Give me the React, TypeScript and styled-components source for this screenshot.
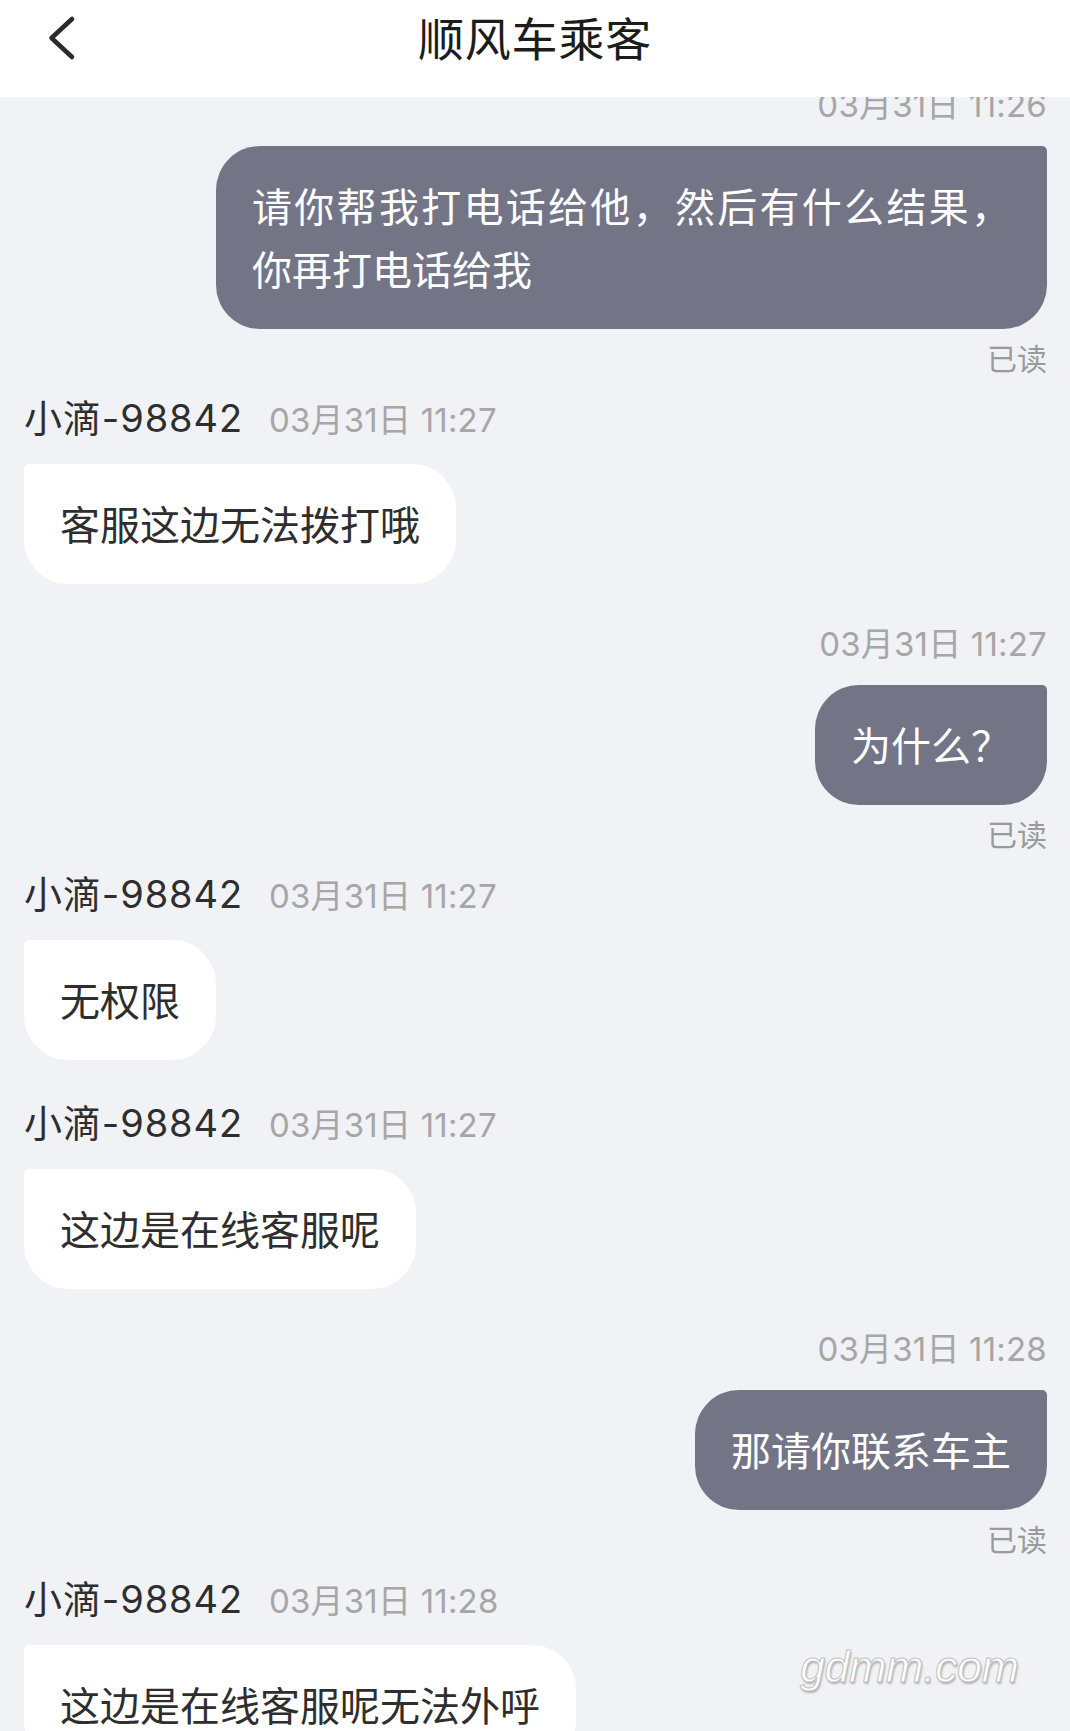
import React from "react";
import styled, { createGlobalStyle } from "styled-components";

const GlobalStyle = createGlobalStyle`
  html, body {
    margin: 0;
    padding: 0;
    background: #f0f2f5;
  }
  body {
    font-family: Inter, "Noto Sans CJK SC", sans-serif;
    -webkit-font-smoothing: antialiased;
  }
  * { box-sizing: border-box; }
`;

const Page = styled.div`
  position: relative;
  width: 1070px;
  height: 1731px;
  display: flex;
  flex-direction: column;
  overflow: hidden;
  background: #f0f2f5;
`;

const Header = styled.header`
  position: relative;
  z-index: 2;
  flex: 0 0 97px;
  height: 97px;
  background: #ffffff;
  display: grid;
  grid-template-columns: 1fr auto 1fr;
  align-items: start;
  padding-top: 7px;
`;

const BackButton = styled.button`
  justify-self: start;
  margin: 8px 0 0 42px;
  padding: 0;
  border: 0;
  background: transparent;
  width: 40px;
  height: 48px;
  display: flex;
  cursor: pointer;
`;

const Title = styled.h1`
  margin: 0;
  font-family: "Noto Sans CJK SC", sans-serif;
  font-size: 46px;
  font-weight: 400;
  line-height: 58px;
  color: #1c1c1c;
  letter-spacing: 0.8px;
`;

const Viewport = styled.main`
  position: relative;
  z-index: 1;
  flex: 1 1 auto;
  min-height: 0;
`;

const ChatList = styled.div`
  display: flex;
  flex-direction: column;
  padding: 0 23px 0 24px;
  margin-top: -12px;
`;

const Block = styled.section<{ $out?: boolean; $read?: boolean }>`
  display: flex;
  flex-direction: column;
  align-items: ${(p) => (p.$out ? "flex-end" : "flex-start")};
  margin-bottom: ${(p) => (p.$read ? 24 : 40)}px;
`;

const MetaRow = styled.div`
  display: flex;
  align-items: baseline;
  gap: 26px;
  height: 46px;
  line-height: 46px;
`;

const Name = styled.span`
  font-size: 38px;
  color: #2e2e2e;
  letter-spacing: 0.9px;
`;

const Time = styled.span<{ $out?: boolean }>`
  font-size: 33px;
  color: #a6a6a6;
  line-height: ${(p) => (p.$out ? "40px" : "46px")};
  height: ${(p) => (p.$out ? "40px" : "auto")};
  letter-spacing: 0.2px;
`;

const Bubble = styled.div<{ $out?: boolean }>`
  margin-top: ${(p) => (p.$out ? 21 : 23)}px;
  max-width: 831px;
  padding: 28px 36px 29px;
  font-family: "Noto Sans CJK SC", sans-serif;
  font-size: 40px;
  line-height: 63px;
  text-align: justify;
  background: ${(p) => (p.$out ? "#737587" : "#ffffff")};
  color: ${(p) => (p.$out ? "#ffffff" : "#2e2e2e")};
  border-radius: ${(p) => (p.$out ? "44px 5px 44px 44px" : "5px 44px 44px 44px")};
`;

const Receipt = styled.div`
  margin-top: 14px;
  font-family: "Noto Sans CJK SC", sans-serif;
  font-size: 30px;
  line-height: 28px;
  color: #9a9a9a;
`;

const Watermark = styled.div`
  position: absolute;
  left: 800px;
  top: 1641px;
  z-index: 3;
  font-family: "Liberation Sans", sans-serif;
  font-style: italic;
  font-size: 45px;
  line-height: 52px;
  color: #ffffff;
  -webkit-text-stroke: 1px #c2c2c2;
  text-shadow: 1px 2px 2px rgba(0, 0, 0, 0.28);
  letter-spacing: -0.5px;
`;

type Msg =
  | { out: true; time: string; text: React.ReactNode; read?: boolean }
  | { out: false; name: string; time: string; text: React.ReactNode };

const messages: Msg[] = [
  {
    out: true,
    time: "03月31日 11:26",
    text: "请你帮我打电话给他，然后有什么结果，你再打电话给我",
    read: true,
  },
  { out: false, name: "小滴-98842", time: "03月31日 11:27", text: "客服这边无法拨打哦" },
  { out: true, time: "03月31日 11:27", text: "为什么？", read: true },
  { out: false, name: "小滴-98842", time: "03月31日 11:27", text: "无权限" },
  { out: false, name: "小滴-98842", time: "03月31日 11:27", text: "这边是在线客服呢" },
  { out: true, time: "03月31日 11:28", text: "那请你联系车主", read: true },
  { out: false, name: "小滴-98842", time: "03月31日 11:28", text: "这边是在线客服呢无法外呼" },
];

const ChevronLeft = () => (
  <svg width="40" height="48" viewBox="0 0 40 48" fill="none">
    <path
      d="M30 4 L9.5 23 L30 42"
      stroke="#2b2b2b"
      strokeWidth="4.6"
      strokeLinecap="round"
      strokeLinejoin="round"
    />
  </svg>
);

export default function App() {
  return (
    <>
      <GlobalStyle />
      <Page>
        <Header>
          <BackButton aria-label="返回">
            <ChevronLeft />
          </BackButton>
          <Title>顺风车乘客</Title>
          <div />
        </Header>
        <Viewport>
          <ChatList>
            {messages.map((m, i) =>
              m.out ? (
                <Block key={i} $out $read={m.read}>
                  <Time $out>{m.time}</Time>
                  <Bubble $out>{m.text}</Bubble>
                  {m.read && <Receipt>已读</Receipt>}
                </Block>
              ) : (
                <Block key={i}>
                  <MetaRow>
                    <Name>{m.name}</Name>
                    <Time>{m.time}</Time>
                  </MetaRow>
                  <Bubble>{m.text}</Bubble>
                </Block>
              )
            )}
          </ChatList>
        </Viewport>
        <Watermark>gdmm.com</Watermark>
      </Page>
    </>
  );
}
